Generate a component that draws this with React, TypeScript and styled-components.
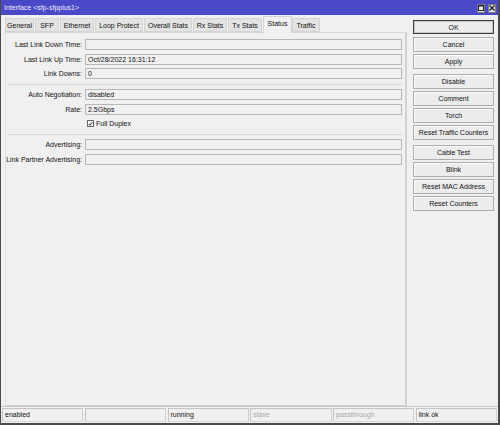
import React from "react";
import styled, { createGlobalStyle } from "styled-components";

const Global = createGlobalStyle`
  html, body { margin: 0; padding: 0; background: #f0f0f0; }
  body { font-family: "Liberation Sans", Arial, sans-serif; font-size: 7px; color: #111; }
  * { box-sizing: border-box; }
`;

const Window = styled.div`
  width: 500px;
  height: 425px;
  display: flex;
  flex-direction: column;
  background: #f0f0f0;
  border-left: 1px solid #4a4a4a;
  border-right: 2px solid #4a4a4a;
  border-bottom: 2px solid #4a4a4a;
  overflow: hidden;
`;

const TitleBar = styled.div`
  height: 15px;
  flex: none;
  background: #4a4ac8;
  display: flex;
  align-items: center;
  padding: 0 2px 0 3px;
`;

const Title = styled.div`
  flex: 1;
  color: #ececff;
  font-size: 7px;
  line-height: 15px;
  white-space: nowrap;
`;

const TitleButtons = styled.div`
  display: flex;
  gap: 3px;
  padding-top: 1px;
`;

const TitleButton = styled.div`
  width: 8px;
  height: 9px;
  background: #e6e6e6;
  border: 1px solid #7a7a7a;
  display: flex;
  align-items: center;
  justify-content: center;
`;

const Body = styled.div`
  flex: 1;
  display: flex;
  padding: 1px 0 0 4px;
  min-height: 0;
`;

const Left = styled.div`
  width: 402px;
  display: flex;
  flex-direction: column;
`;

const TabStrip = styled.div`
  height: 16px;
  flex: none;
  display: flex;
  align-items: flex-end;
`;

const Tab = styled.div<{ $w: number; $active?: boolean }>`
  width: ${(p) => p.$w}px;
  height: ${(p) => (p.$active ? 17 : 14)}px;
  margin-right: ${(p) => (p.$active ? 0 : 1)}px;
  margin-bottom: ${(p) => (p.$active ? -1 : 0)}px;
  position: relative;
  z-index: ${(p) => (p.$active ? 2 : 1)};
  background: ${(p) => (p.$active ? "#f0f0f0" : "#e3e3e3")};
  border: 1px solid #d4d4d4;
  border-bottom: ${(p) => (p.$active ? "none" : "1px solid #d4d4d4")};
  display: flex;
  align-items: center;
  justify-content: center;
  padding-bottom: ${(p) => (p.$active ? 3 : 0)}px;
  white-space: nowrap;
  font-size: 7px;
  color: #111;
`;

const Panel = styled.div`
  flex: 1;
  border-top: 1px solid #d8d8d8;
  border-left: 1px solid #e2e2e2;
  border-right: 2px solid #d2d2d2;
  border-bottom: 1px solid #cfcfcf;
  padding: 6px 3px 0 0;
`;

const Form = styled.div`
  display: flex;
  flex-direction: column;
  gap: 3.5px;
`;

const Row = styled.div`
  display: grid;
  grid-template-columns: 76px 1fr;
  column-gap: 3px;
  align-items: center;
  height: 11px;
`;

const Label = styled.div`
  text-align: right;
  white-space: nowrap;
  font-size: 7px;
  color: #111;
`;

const Field = styled.div`
  height: 11px;
  border: 1px solid #b7b7b7;
  background: #f0f0f0;
  font-size: 7px;
  line-height: 9px;
  padding-left: 2px;
  color: #111;
  white-space: nowrap;
`;

const Separator = styled.div`
  height: 0;
  border-top: 1px solid #d6d6d6;
  margin: 1px 0 1px 2px;
`;

const CheckWrap = styled.label`
  grid-column: 2;
  display: flex;
  align-items: center;
  gap: 2px;
  padding-left: 2px;
  font-size: 7px;
`;

const CheckBox = styled.span`
  width: 7px;
  height: 7px;
  border: 1px solid #666;
  background: #fafafa;
  display: flex;
  align-items: center;
  justify-content: center;
`;

const Right = styled.div`
  width: 81px;
  margin-left: 6px;
  padding-top: 4px;
  display: flex;
  flex-direction: column;
`;

const ButtonGroup = styled.div`
  display: flex;
  flex-direction: column;
  gap: 2px;
  margin-bottom: 5px;
`;

const Button = styled.div<{ $default?: boolean }>`
  height: ${(p) => (p.$default ? 14 : 15)}px;
  margin-bottom: ${(p) => (p.$default ? 1 : 0)}px;
  border: 1px solid ${(p) => (p.$default ? "#3c3c3c" : "#adadad")};
  background: #ececec;
  box-shadow: ${(p) => (p.$default ? "inset 0 0 0 1px #c8c8c8" : "inset 1px 1px 0 #fbfbfb")};
  display: flex;
  align-items: center;
  justify-content: center;
  font-size: 7px;
  color: #111;
  white-space: nowrap;
`;

const StatusBar = styled.div`
  height: 17px;
  flex: none;
  border-top: 1px solid #c9c9c9;
  padding: 1px;
  display: grid;
  grid-template-columns: repeat(6, 1fr);
  gap: 1.5px;
`;

const StatusCell = styled.div<{ $dim?: boolean }>`
  border-top: 1px solid #c4c4c4;
  border-left: 1px solid #c4c4c4;
  border-right: 1px solid #d0d0d0;
  border-bottom: 1px solid #d8d8d8;
  font-size: 7px;
  line-height: 12px;
  padding-left: 2px;
  color: ${(p) => (p.$dim ? "#a8a8a8" : "#111")};
  white-space: nowrap;
  overflow: hidden;
`;

const tabs: [string, number][] = [
  ["General", 29],
  ["SFP", 24],
  ["Ethernet", 34],
  ["Loop Protect", 48],
  ["Overall Stats", 48],
  ["Rx Stats", 34],
  ["Tx Stats", 34],
  ["Status", 29],
  ["Traffic", 28],
];

const groups = [
  ["OK", "Cancel", "Apply"],
  ["Disable", "Comment", "Torch", "Reset Traffic Counters"],
  ["Cable Test", "Blink", "Reset MAC Address", "Reset Counters"],
];

export default function App() {
  return (
    <>
      <Global />
      <Window>
        <TitleBar>
          <Title>Interface &lt;sfp-sfpplus1&gt;</Title>
          <TitleButtons>
            <TitleButton>
              <svg width="6" height="6" viewBox="0 0 6 6">
                <rect x="0.5" y="0.5" width="5" height="5" fill="none" stroke="#222" strokeWidth="1" />
                <line x1="0" y1="1" x2="6" y2="1" stroke="#222" strokeWidth="1" />
              </svg>
            </TitleButton>
            <TitleButton>
              <svg width="6" height="6" viewBox="0 0 6 6">
                <path d="M0.5 0.5 L5.5 5.5 M5.5 0.5 L0.5 5.5" stroke="#222" strokeWidth="1.4" />
              </svg>
            </TitleButton>
          </TitleButtons>
        </TitleBar>
        <Body>
          <Left>
            <TabStrip>
              {tabs.map(([t, w]) => (
                <Tab key={t} $w={w} $active={t === "Status"}>
                  {t}
                </Tab>
              ))}
            </TabStrip>
            <Panel>
              <Form>
                <Row>
                  <Label>Last Link Down Time:</Label>
                  <Field />
                </Row>
                <Row>
                  <Label>Last Link Up Time:</Label>
                  <Field>Oct/28/2022 16:31:12</Field>
                </Row>
                <Row>
                  <Label>Link Downs:</Label>
                  <Field>0</Field>
                </Row>
                <Separator />
                <Row>
                  <Label>Auto Negotiation:</Label>
                  <Field>disabled</Field>
                </Row>
                <Row>
                  <Label>Rate:</Label>
                  <Field>2.5Gbps</Field>
                </Row>
                <Row>
                  <CheckWrap>
                    <CheckBox>
                      <svg width="6" height="6" viewBox="0 0 6 6">
                        <path d="M0.8 3 L2.3 4.6 L5.2 1" fill="none" stroke="#111" strokeWidth="1.1" />
                      </svg>
                    </CheckBox>
                    Full Duplex
                  </CheckWrap>
                </Row>
                <Separator />
                <Row>
                  <Label>Advertising:</Label>
                  <Field />
                </Row>
                <Row>
                  <Label>Link Partner Advertising:</Label>
                  <Field />
                </Row>
              </Form>
            </Panel>
          </Left>
          <Right>
            {groups.map((g, i) => (
              <ButtonGroup key={i}>
                {g.map((b) => (
                  <Button key={b} $default={b === "OK"}>
                    {b}
                  </Button>
                ))}
              </ButtonGroup>
            ))}
          </Right>
        </Body>
        <StatusBar>
          <StatusCell>enabled</StatusCell>
          <StatusCell />
          <StatusCell>running</StatusCell>
          <StatusCell $dim>slave</StatusCell>
          <StatusCell $dim>passthrough</StatusCell>
          <StatusCell>link ok</StatusCell>
        </StatusBar>
      </Window>
    </>
  );
}
